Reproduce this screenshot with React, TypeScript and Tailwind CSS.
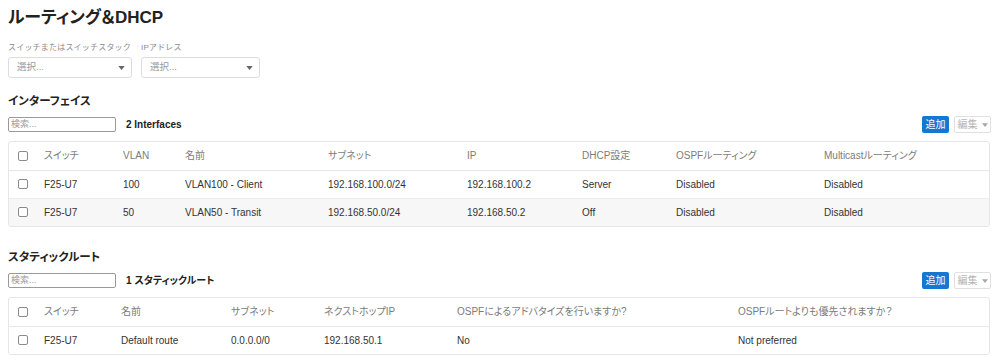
import React from "react";

const font = "[font-family:'Liberation_Sans','Noto_Sans_CJK_JP',sans-serif] [font-feature-settings:'palt']";

type Col = { label: string; width: string };

const interfaceCols: Col[] = [
  { label: "スイッチ", width: "79px" },
  { label: "VLAN", width: "62px" },
  { label: "名前", width: "143px" },
  { label: "サブネット", width: "139px" },
  { label: "IP", width: "115px" },
  { label: "DHCP設定", width: "94px" },
  { label: "OSPFルーティング", width: "148px" },
  { label: "Multicastルーティング", width: "auto" },
];

const interfaceRows = [
  ["F25-U7", "100", "VLAN100 - Client", "192.168.100.0/24", "192.168.100.2", "Server", "Disabled", "Disabled"],
  ["F25-U7", "50", "VLAN50 - Transit", "192.168.50.0/24", "192.168.50.2", "Off", "Disabled", "Disabled"],
];

const routeCols: Col[] = [
  { label: "スイッチ", width: "77px" },
  { label: "名前", width: "110px" },
  { label: "サブネット", width: "93px" },
  { label: "ネクストホップIP", width: "133px" },
  { label: "OSPFによるアドバタイズを行いますか?", width: "281px" },
  { label: "OSPFルートよりも優先されますか？", width: "auto" },
];

const routeRows = [["F25-U7", "Default route", "0.0.0.0/0", "192.168.50.1", "No", "Not preferred"]];

const Checkbox = () => (
  <span className="block w-[10px] h-[10px] border border-[#8a8a8a] rounded-[2px] bg-white" />
);

const Caret = ({ className }: { className: string }) => (
  <svg viewBox="0 0 8 5" className={className}>
    <path d="M0 0h8L4 5z" fill="currentColor" />
  </svg>
);

const Select = ({ label, width }: { label: string; width: string }) => (
  <div className="flex flex-col">
    <span className="text-[8px] leading-[11px] tracking-[0.2px] text-[#8c8c8c] [font-feature-settings:normal]">
      {label}
    </span>
    <div
      className="mt-1 h-[21px] flex items-center justify-between pl-[8px] pr-[6px] border border-[#dcdcdc] rounded-[3px] bg-white"
      style={{ width }}
    >
      <span className="text-[9.5px] text-[#9a9a9a]">選択...</span>
      <Caret className="text-[#666] w-[7px] h-[4px]" />
    </div>
  </div>
);

const Toolbar = ({ count }: { count: string }) => (
  <div className="mt-2 flex items-center h-[17px]">
    <div className="w-[108px] h-[15px] border border-[#9a9a9a] rounded-[2px] flex items-center pl-[2px]">
      <span className="text-[9px] text-[#9a9a9a]">検索...</span>
    </div>
    <span className="ml-[10px] text-[10px] font-bold text-[#222]">{count}</span>
    <div className="ml-auto flex items-center gap-[5px] pr-[7px]">
      <button className="h-[17px] w-[27px] bg-[#1677d2] rounded-[2px] text-white text-[10px] leading-none">
        追加
      </button>
      <button className="h-[17px] w-[37px] border border-[#e0e0e0] rounded-[2px] bg-white flex items-center justify-center gap-[4px] text-[#b5b5b5] text-[10px] leading-none">
        編集
        <Caret className="text-[#a8a8a8] w-[6px] h-[4px]" />
      </button>
    </div>
  </div>
);

const DataTable = ({ cols, rows }: { cols: Col[]; rows: string[][] }) => (
  <div className="mt-[8px] mr-[8px] border border-[#e6e6e6] rounded-[3px] overflow-hidden">
    <table className="w-full table-fixed border-collapse text-[10px]">
      <colgroup>
        <col style={{ width: "35px" }} />
        {cols.map((c, i) => (
          <col key={i} style={c.width === "auto" ? undefined : { width: c.width }} />
        ))}
      </colgroup>
      <thead>
        <tr className="h-[28px] border-b border-[#e6e6e6]">
          <td className="pl-[9px]">
            <Checkbox />
          </td>
          {cols.map((c) => (
            <td key={c.label} className="text-[#7b7b7b] whitespace-nowrap">
              {c.label}
            </td>
          ))}
        </tr>
      </thead>
      <tbody>
        {rows.map((r, i) => (
          <tr
            key={i}
            className={`h-[28px] ${i % 2 === 1 ? "bg-[#f7f7f7]" : "bg-white"} ${
              i < rows.length - 1 ? "border-b border-[#ececec]" : ""
            }`}
          >
            <td className="pl-[9px]">
              <Checkbox />
            </td>
            {r.map((v, j) => (
              <td key={j} className="text-[#333] whitespace-nowrap">
                {v}
              </td>
            ))}
          </tr>
        ))}
      </tbody>
    </table>
  </div>
);

export default function App() {
  return (
    <div className={`${font} w-[998px] h-[362px] bg-white pl-[8px] pt-[8px] overflow-hidden`}>
      <h1 className="text-[17px] leading-[20px] font-bold text-[#222]">ルーティング＆DHCP</h1>

      <div className="mt-[14px] flex gap-[9px]">
        <Select label="スイッチまたはスイッチスタック" width="124px" />
        <Select label="IPアドレス" width="119px" />
      </div>

      <h2 className="mt-[16px] text-[11.5px] leading-[14px] font-bold text-[#222]">インターフェイス</h2>
      <Toolbar count="2 Interfaces" />
      <DataTable cols={interfaceCols} rows={interfaceRows} />

      <h2 className="mt-[23px] text-[11.5px] leading-[14px] font-bold text-[#222]">スタティックルート</h2>
      <Toolbar count="1 スタティックルート" />
      <DataTable cols={routeCols} rows={routeRows} />
    </div>
  );
}
